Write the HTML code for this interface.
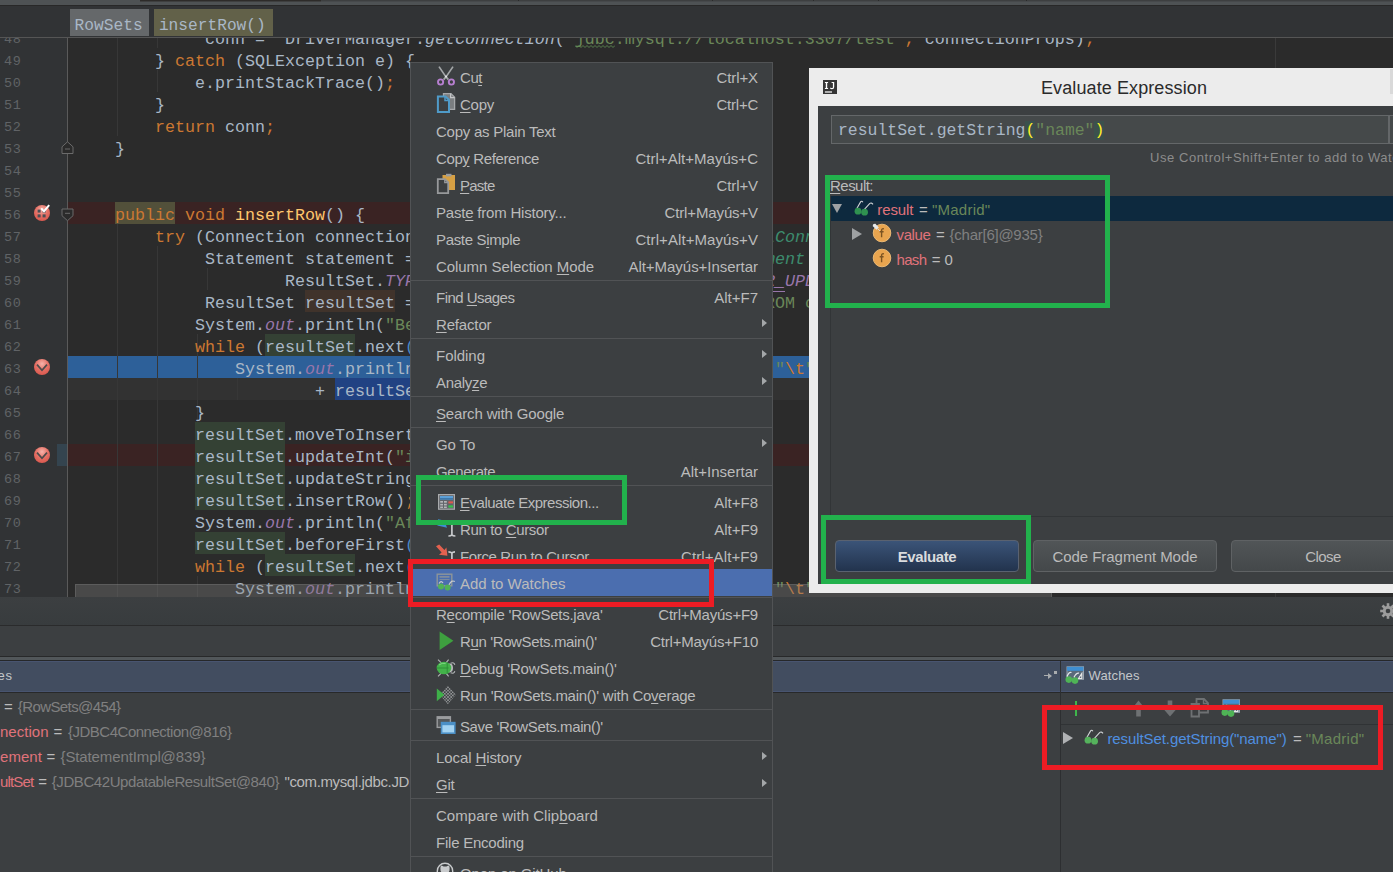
<!DOCTYPE html>
<html>
<head>
<meta charset="utf-8">
<title>Evaluate Expression</title>
<style>
*{box-sizing:border-box;margin:0;padding:0}
html,body{width:1393px;height:872px;overflow:hidden;background:#3c3f41}
body{position:relative;font-family:"Liberation Sans",sans-serif;color:#bbbbbb}
.abs{position:absolute}
/* ---------- top ---------- */
#topstrip{left:0;top:0;width:1393px;height:6px;background:#4e5254;border-bottom:1px solid #282828}
#crumbs{left:0;top:6px;width:1393px;height:32px;background:#313335;border-bottom:1px solid #555555}
.crumb{position:absolute;top:3px;height:27px;font-family:"Liberation Mono",monospace;font-size:16.2px;line-height:35px;color:#a9b7c6;white-space:pre;overflow:hidden}
/* ---------- editor ---------- */
#editor{left:0;top:38px;width:1393px;height:560px;background:#2b2b2b;overflow:hidden}
#gutter{left:0;top:0;width:68px;height:560px;background:#313335;border-right:1px solid #5a5a5a}
.ln{position:absolute;left:4px;height:22px;line-height:28px;overflow:hidden;letter-spacing:.6px;font-family:"Liberation Mono",monospace;font-size:13.5px;color:#606366;white-space:pre}
.cl{position:absolute;left:75px;height:22px;line-height:28px;font-family:"Liberation Mono",monospace;font-size:16.67px;color:#a9b7c6;white-space:pre}
.rowbg{position:absolute;left:68px;height:22px}
.k{color:#cc7832}.s{color:#6a8759}.f{color:#9876aa;font-style:italic}.m{color:#ffc66d}.t{color:#3d8b6e;font-style:italic}.i{font-style:italic}
.hl{background:#344134}.hw{background:#40332b}
.hl,.hw,.hb{display:inline-block;height:22px;vertical-align:top}
.guide{position:absolute;width:1px;background:#373737}
/* ---------- menu ---------- */
#menu{left:410px;top:62px;width:363px;height:820px;background:#3c3f41;border:1px solid #515355;overflow:hidden;font-size:15px;color:#bbbbbb}
.mi{position:absolute;left:0;width:361px;height:27px}
.mi.sel{background:#4b6eaf}
.ml{position:absolute;top:1px;line-height:27px;white-space:pre}
.ms{position:absolute;right:14px;top:1px;line-height:27px;white-space:pre}
.mic{position:absolute;left:25px;top:6px;width:16px;height:16px}
.mar{position:absolute;left:351px;top:9px;width:0;height:0;border-left:5px solid #a4a7a9;border-top:4.5px solid transparent;border-bottom:4.5px solid transparent}
.msep{position:absolute;left:0;width:361px;height:1px;background:#515355}
u{text-decoration:underline;text-underline-offset:2px}
/* ---------- dialog ---------- */
#dlg{left:809px;top:68px;width:600px;height:525px;background:#ececec;overflow:hidden}
#dlgin{left:9px;top:38px;width:600px;height:478px;background:#3c3f41;overflow:hidden}
.trow{height:25px;line-height:25px;font-size:15px;white-space:pre}
.trow span{top:0;white-space:pre}
.btn{position:absolute;height:32px;line-height:31px;text-align:center;font-size:15px;color:#bbbbbb;border:1px solid #5f6264;border-radius:4px;background:linear-gradient(#515557,#44484a);white-space:pre}
.btn.def{font-weight:bold;color:#dadcde;border-color:#5a6270;background:linear-gradient(#3b5478,#22334d)}
/* ---------- bottom ---------- */
#bot{left:0;top:597px;width:1393px;height:275px;background:#3c3f41;overflow:hidden}
.brow{height:25px;line-height:25px;font-size:15px;white-space:pre;width:1393px}
.brow span{top:0;white-space:pre}
</style>
</head>
<body>
<div id="topstrip" class="abs"><div class="abs" style="left:140px;top:0;width:1253px;height:2px;background:linear-gradient(#3d3f40 50%,#46494b 50%)"></div><div class="abs" style="left:140px;top:0;width:181px;height:2px;background:linear-gradient(#2d2b29 50%,#3e3f3f 50%)"></div><div class="abs" style="left:518px;top:0;width:1px;height:1px;background:#2b2b2b"></div><div class="abs" style="left:712px;top:0;width:1px;height:1px;background:#2b2b2b"></div><div class="abs" style="left:813px;top:0;width:1px;height:1px;background:#2b2b2b"></div><div class="abs" style="left:878px;top:0;width:1px;height:1px;background:#2b2b2b"></div><div class="abs" style="left:1026px;top:0;width:1px;height:1px;background:#2b2b2b"></div></div>
<div id="crumbs" class="abs">
  <div class="crumb" style="left:70px;width:79px;background:#65686a;padding-left:4.6px">RowSets</div>
  <div class="crumb" style="left:154px;width:119px;background:#626149;padding-left:4.9px">insertRow()</div>
</div>

<div id="editor" class="abs">
  <!-- EDITOR-START -->
  <div class="rowbg" style="top:164px;width:1325px;background:#3a2323"></div>
  <div class="rowbg" style="top:318px;width:1325px;background:#2d6099"></div>
  <div class="rowbg" style="top:340px;width:1325px;background:#323232"></div>
  <div class="rowbg" style="top:406px;width:1325px;background:#3a2323"></div>
  <div class="guide" style="left:117px;top:-12px;height:110px"></div>
  <div class="guide" style="left:157px;top:-12px;height:22px"></div>
  <div class="guide" style="left:157px;top:32px;height:22px"></div>
  <div class="guide" style="left:117px;top:186px;height:374px"></div>
  <div class="guide" style="left:157px;top:208px;height:352px"></div>
  <div class="guide" style="left:197px;top:296px;height:88px"></div>
  <div class="guide" style="left:197px;top:538px;height:22px"></div>
  <div class="guide" style="left:237px;top:340px;height:22px"></div>
  <div class="guide" style="left:207px;top:230px;height:22px"></div>
  <div class="abs" style="left:1275px;top:0;width:1px;height:560px;background:#3a3a3a"></div>
  <div id="gutter" class="abs"></div>
  <div class="ln" style="top:-12px">48</div>
  <div class="ln" style="top:10px">49</div>
  <div class="ln" style="top:32px">50</div>
  <div class="ln" style="top:54px">51</div>
  <div class="ln" style="top:76px">52</div>
  <div class="ln" style="top:98px">53</div>
  <div class="ln" style="top:120px">54</div>
  <div class="ln" style="top:142px">55</div>
  <div class="ln" style="top:164px">56</div>
  <div class="ln" style="top:186px">57</div>
  <div class="ln" style="top:208px">58</div>
  <div class="ln" style="top:230px">59</div>
  <div class="ln" style="top:252px">60</div>
  <div class="ln" style="top:274px">61</div>
  <div class="ln" style="top:296px">62</div>
  <div class="ln" style="top:318px">63</div>
  <div class="ln" style="top:340px">64</div>
  <div class="ln" style="top:362px">65</div>
  <div class="ln" style="top:384px">66</div>
  <div class="ln" style="top:406px">67</div>
  <div class="ln" style="top:428px">68</div>
  <div class="ln" style="top:450px">69</div>
  <div class="ln" style="top:472px">70</div>
  <div class="ln" style="top:494px">71</div>
  <div class="ln" style="top:516px">72</div>
  <div class="ln" style="top:538px">73</div>
  <div class="cl" style="top:-12px;left:205px;">conn =  DriverManager.<span class="i">getConnection</span>(<span class="s">"jdbc:mysql://localhost:3307/test"</span><span class="k">,</span> connectionProps)<span class="k">;</span></div>
  <div class="cl" style="top:10px;left:155px;">} <span class="k">catch</span> (SQLException e) {</div>
  <div class="cl" style="top:32px;left:195px;">e.printStackTrace()<span class="k">;</span></div>
  <div class="cl" style="top:54px;left:155px;">}</div>
  <div class="cl" style="top:76px;left:155px;"><span class="k">return</span> conn<span class="k">;</span></div>
  <div class="cl" style="top:98px;left:115px;">}</div>
  <div class="cl" style="top:164px;left:115px;"><span class="k hb" style="background:#52503a">public</span> <span class="k">void</span> <span class="m">insertRow</span>() {</div>
  <div class="cl" style="top:186px;left:155px;"><span class="k">try</span> (Connection connection = </div>
  <div class="cl" style="top:186px;left:765px;"><span class="t">lConnection</span></div>
  <div class="cl" style="top:208px;left:205px;">Statement statement = </div>
  <div class="cl" style="top:208px;left:765px;"><span class="t">ment</span></div>
  <div class="cl" style="top:230px;left:285px;">ResultSet.<span class="f">TYPE_SCR</span></div>
  <div class="cl" style="top:230px;left:765px;"><span class="f"><span style="border-bottom:1px solid #9876aa">R_</span>UPDATABLE</span></div>
  <div class="cl" style="top:252px;left:205px;">ResultSet <span class="hw">resultSet</span> = </div>
  <div class="cl" style="top:252px;left:765px;"><span class="s">ROM customers</span></div>
  <div class="cl" style="top:274px;left:195px;">System.<span class="f">out</span>.println(<span class="s">"Before"</span></div>
  <div class="cl" style="top:296px;left:195px;"><span class="k">while</span> (<span class="hl">resultSet</span>.next<span style="color:#4a88c7">(</span></div>
  <div class="cl" style="top:318px;left:235px;">System.<span class="f">out</span>.println(</div>
  <div class="cl" style="top:318px;left:775px;"><span class="s">"</span><span class="k">\t</span><span class="s">"</span></div>
  <div class="cl" style="top:340px;left:315px;">+ <span class="hb" style="background:#214283">resultSet.getString(</span></div>
  <div class="cl" style="top:362px;left:195px;">}</div>
  <div class="cl" style="top:384px;left:195px;"><span class="hl">resultSet</span>.moveToInsertRow</div>
  <div class="cl" style="top:406px;left:195px;"><span class="hl">resultSet</span>.updateInt(<span class="s">"id"</span></div>
  <div class="cl" style="top:428px;left:195px;"><span class="hl">resultSet</span>.updateString(</div>
  <div class="cl" style="top:450px;left:195px;"><span class="hl">resultSet</span>.insertRow()<span class="k">;</span></div>
  <div class="cl" style="top:472px;left:195px;">System.<span class="f">out</span>.println(<span class="s">"After"</span></div>
  <div class="cl" style="top:494px;left:195px;"><span class="hl">resultSet</span>.beforeFirst<span style="color:#4a88c7">(</span></div>
  <div class="cl" style="top:516px;left:195px;"><span class="k">while</span> (<span class="hl">resultSet</span>.next<span style="color:#4a88c7">(</span></div>
  <div class="cl" style="top:538px;left:235px;">System.<span class="f">out</span>.println(</div>
  <div class="cl" style="top:538px;left:775px;"><span class="s">"</span><span class="k">\t</span><span class="s">"</span></div>
  <svg class="abs" style="left:34px;top:167px;overflow:visible" width="16" height="16" viewBox="0 0 16 16"><defs><radialGradient id="bpg56" cx="50%" cy="30%" r="70%"><stop offset="0" stop-color="#f6b3aa"/><stop offset="0.55" stop-color="#e56f64"/><stop offset="1" stop-color="#d9594f"/></radialGradient></defs><circle cx="8" cy="8" r="8" fill="url(#bpg56)"/><g fill="#4a4f55"><rect x="3.6" y="4.6" width="3" height="3"/><rect x="8.6" y="4.6" width="3" height="3"/><rect x="3.6" y="9.4" width="3" height="3"/><rect x="8.6" y="9.4" width="3" height="3"/></g><path d="M7.2 3.4 L10 6.2 L15.2 0.2" fill="none" stroke="#ffffff" stroke-width="2"/></svg>
  <svg class="abs" style="left:34px;top:321px;overflow:visible" width="16" height="16" viewBox="0 0 16 16"><defs><radialGradient id="bpg63" cx="50%" cy="30%" r="70%"><stop offset="0" stop-color="#f6b3aa"/><stop offset="0.55" stop-color="#e56f64"/><stop offset="1" stop-color="#d9594f"/></radialGradient></defs><circle cx="8" cy="8" r="8" fill="url(#bpg63)"/><path d="M3 5.6 L8 11.2 L13 5.6" fill="none" stroke="#4b4b4b" stroke-width="1.7"/></svg>
  <svg class="abs" style="left:34px;top:409px;overflow:visible" width="16" height="16" viewBox="0 0 16 16"><defs><radialGradient id="bpg67" cx="50%" cy="30%" r="70%"><stop offset="0" stop-color="#f6b3aa"/><stop offset="0.55" stop-color="#e56f64"/><stop offset="1" stop-color="#d9594f"/></radialGradient></defs><circle cx="8" cy="8" r="8" fill="url(#bpg67)"/><path d="M3 5.6 L8 11.2 L13 5.6" fill="none" stroke="#4b4b4b" stroke-width="1.7"/></svg>
  <div class="abs" style="left:57px;top:406px;width:10px;height:22px;background:#34444f"></div>
  <svg class="abs" style="left:61px;top:103px" width="13" height="14" viewBox="0 0 13 14"><path d="M1 12.5 V5.8 L6.5 0.8 L12 5.8 V12.5 Z" fill="#2b2b2b" stroke="#6b6b6b" stroke-width="1"/><path d="M4 8 H9" stroke="#6b6b6b" stroke-width="1"/></svg>
  <svg class="abs" style="left:61px;top:170px" width="13" height="14" viewBox="0 0 13 14"><path d="M1 1 V7.7 L6.5 12.7 L12 7.7 V1 Z" fill="#2b2b2b" stroke="#6b6b6b" stroke-width="1"/><path d="M4 5.3 H9" stroke="#6b6b6b" stroke-width="1"/></svg>
  <svg class="abs" style="left:575px;top:7px" width="40" height="3" viewBox="0 0 40 3"><polyline points="0,0.5 2,2.5 4,0.5 6,2.5 8,0.5 10,2.5 12,0.5 14,2.5 16,0.5 18,2.5 20,0.5 22,2.5 24,0.5 26,2.5 28,0.5 30,2.5 32,0.5 34,2.5 36,0.5 38,2.5 40,0.5" fill="none" stroke="#5f8a52" stroke-width="0.9"/></svg>
  <div class="abs" style="left:75px;top:546px;width:977px;height:13px;background:rgba(128,128,128,0.35);border:1px solid rgba(150,150,150,0.25);border-bottom:none"></div>
  <!-- EDITOR-END -->
</div>

<!-- BOTTOM-START -->
  <div id="bot" class="abs">
 <div class="abs" style="left:0;top:0px;width:1393px;height:28px;background:linear-gradient(#3c3f41,#383c3e)"></div>
 <div class="abs" style="left:0;top:28px;width:1393px;height:1px;background:#2a2b2c"></div>
 <div class="abs" style="left:0;top:59px;width:1393px;height:1px;background:#28292a"></div>
 <div class="abs" style="left:0;top:60px;width:1393px;height:3px;background:#52575a"></div>
 <div class="abs" style="left:0;top:63px;width:1393px;height:1px;background:#26282a"></div>
 <div class="abs" style="left:0;top:64px;width:1393px;height:31px;background:#424d60;border-top:1px solid #485470;border-bottom:1px solid #485470"></div>
 <div class="abs" style="left:0;top:95px;width:1393px;height:1px;background:#28292a"></div>
 <div class="abs" style="left:1060px;top:64px;width:1px;height:220px;background:#2d2f31"></div>
 <svg class="abs" style="left:1380px;top:6px" width="16" height="16" viewBox="0 0 16 16"><g fill="#9c9c9c"><circle cx="8" cy="8" r="5.2"/><g><rect x="6.7" y="0.2" width="2.6" height="15.6"/><rect x="6.7" y="0.2" width="2.6" height="15.6" transform="rotate(45 8 8)"/><rect x="6.7" y="0.2" width="2.6" height="15.6" transform="rotate(90 8 8)"/><rect x="6.7" y="0.2" width="2.6" height="15.6" transform="rotate(135 8 8)"/></g></g><circle cx="8" cy="8" r="2.3" fill="#3c3f41"/></svg>
 <div class="abs" style="left:-48px;top:69px;width:60px;text-align:right;height:20px;line-height:20px;font-size:13px;color:#c4c7ca;white-space:pre;letter-spacing:0.752px;margin-left:0.752px">Variables</div>
 <div class="abs" style="left:1044px;top:78px;width:7px;height:1.3px;background:#a9acae"></div><div class="abs" style="left:1048px;top:75.5px;width:0;height:0;border-left:4px solid #a9acae;border-top:3px solid transparent;border-bottom:3px solid transparent"></div><div class="abs" style="left:1053.5px;top:73.5px;width:3px;height:3px;background:#a9acae"></div>
 <svg class="abs" style="left:1065px;top:69px" width="20" height="20" viewBox="0 0 20 20"><rect x="2" y="0.8" width="16.5" height="12.5" fill="#5a6a7a" stroke="#98a4b0" stroke-width="1"/><rect x="2" y="0.8" width="16.5" height="4" fill="#3f8fd2"/><path d="M13.5 12.5 L16.8 7.5 V12.5 Z" fill="none" stroke="#e8e8e8" stroke-width="1.2"/><circle cx="3.8" cy="13.6" r="3.3" fill="#4fb356"/><circle cx="10" cy="14.6" r="3.3" fill="#4fb356"/><path d="M2 10.5 Q4 5.5 6.5 6.5 M9 11.2 Q11.5 6.5 14 7.2" fill="none" stroke="#e4e6e8" stroke-width="1.2"/></svg>
 <div class="abs" style="left:1088.6px;top:69px;height:20px;line-height:20px;font-size:13px;color:#c4c7ca;white-space:pre;letter-spacing:0.129px">Watches</div>
 <div class="abs brow" style="left:0;top:96.89999999999998px"><span class="abs" style="left:3.9px;color:#bbbbbb;letter-spacing:0px">=</span><span class="abs" style="left:17.8px;color:#808080;letter-spacing:-0.6px">{RowSets@454}</span></div>
 <div class="abs brow" style="left:0;top:122.10000000000002px"><span class="abs" style="left:0;color:#e0737b;letter-spacing:0.018px">nection</span><span class="abs" style="left:53.5px;color:#bbbbbb;letter-spacing:0px">=</span><span class="abs" style="left:67.9px;color:#808080;letter-spacing:-0.48px">{JDBC4Connection@816}</span></div>
 <div class="abs brow" style="left:0;top:147.29999999999995px"><span class="abs" style="left:0;color:#e0737b;letter-spacing:0.059px">ement</span><span class="abs" style="left:46.5px;color:#bbbbbb;letter-spacing:0px">=</span><span class="abs" style="left:60.5px;color:#808080;letter-spacing:-0.115px">{StatementImpl@839}</span></div>
 <div class="abs brow" style="left:0;top:171.70000000000005px"><span class="abs" style="left:0;color:#e0737b;letter-spacing:-0.843px">ultSet</span><span class="abs" style="left:38.2px;color:#bbbbbb;letter-spacing:0px">=</span><span class="abs" style="left:51.7px;color:#808080;letter-spacing:-0.408px">{JDBC42UpdatableResultSet@840}</span><span class="abs" style="left:284.5px;color:#bbbbbb;letter-spacing:-0.372px">"com.mysql.jdbc.JDBC42UpdatableResultSet</span></div>
 <div class="abs" style="left:1075px;top:104px;width:2px;height:15px;background:#3fb64b"></div><div class="abs" style="left:1069px;top:110.5px;width:14px;height:2px;background:#3fb64b"></div>
 <svg class="abs" style="left:1132px;top:103px" width="13" height="17" viewBox="0 0 13 17"><path d="M6.5 0.5 L12.5 8 H8.8 V16.5 H4.2 V8 H0.5 Z" fill="#6e7173"/></svg>
 <svg class="abs" style="left:1163px;top:103px" width="14" height="17" viewBox="0 0 14 17"><path d="M7 16.5 L13.5 9 H9.3 V0.5 H4.7 V9 H0.5 Z" fill="#6e7173"/></svg>
 <svg class="abs" style="left:1190px;top:101px" width="20" height="20" viewBox="0 0 20 20"><path d="M6.5 1 H14 L18 5 V14.5 H6.5 Z" fill="none" stroke="#6e7173" stroke-width="1.8"/><path d="M13.5 1 V5.5 H18" fill="none" stroke="#6e7173" stroke-width="1.4"/><path d="M1.5 6 H9 V18.5 H1.5 Z" fill="#3c3f41" stroke="#6e7173" stroke-width="1.8"/></svg>
 <svg class="abs" style="left:1221px;top:102px" width="20" height="20" viewBox="0 0 20 20"><rect x="2" y="0.8" width="16.5" height="12.5" fill="#5a6a7a" stroke="#98a4b0" stroke-width="1"/><rect x="2" y="0.8" width="16.5" height="4" fill="#3f8fd2"/><path d="M13.5 12.5 L16.8 7.5 V12.5 Z" fill="none" stroke="#e8e8e8" stroke-width="1.2"/><circle cx="3.8" cy="13.6" r="3.3" fill="#4fb356"/><circle cx="10" cy="14.6" r="3.3" fill="#4fb356"/><path d="M2 10.5 Q4 5.5 6.5 6.5 M9 11.2 Q11.5 6.5 14 7.2" fill="none" stroke="#e4e6e8" stroke-width="1.2"/></svg>
 <div class="abs" style="left:1061px;top:127px;width:340px;height:1px;background:#303335"></div>
 <div class="abs" style="left:1063px;top:135px;width:0;height:0;border-left:10.5px solid #b0b2b4;border-top:6px solid transparent;border-bottom:6px solid transparent"></div>
 <svg class="abs" style="left:1083.5px;top:132px" width="20" height="16" viewBox="0 0 20 16"><path d="M2.8 8.6 L6.6 1.9 Q7.6 0.4 8.9 2.2 M10.2 9.6 L15.6 3.6 Q17.4 2.2 19 4.4" fill="none" stroke="#d0d3d5" stroke-width="1.1"/><circle cx="4" cy="11.2" r="3.4" fill="#55b25c"/><circle cx="10.6" cy="12.2" r="3.4" fill="#55b25c"/></svg>
 <div class="abs brow" style="left:0;top:129.0px"><span class="abs" style="left:1107.4px;color:#4f8fe0;letter-spacing:-0.084px">resultSet.getString("name")</span><span class="abs" style="left:1293px;color:#bbbbbb;letter-spacing:0px">=</span><span class="abs" style="left:1305.7px;color:#6a8759;letter-spacing:0.275px">"Madrid"</span></div>
</div>
  <!-- BOTTOM-END -->
<!-- MENU-START -->
  <div id="menu" class="abs">
  <div class="mi" style="top:0px"><span class="mic ic-cut"><svg width="20" height="22" viewBox="0 0 20 22" style="position:absolute;left:0;top:-4px"><path d="M3 1.6 L9.6 11.4 L12.4 14.6 M17 1.6 L10.4 11.4 L7.6 14.6" stroke="#a4a7a9" stroke-width="1.7" fill="none" stroke-linejoin="round"/><circle cx="10" cy="11.6" r="1.1" fill="#e4e4e4"/><circle cx="4.6" cy="17" r="2.6" fill="none" stroke="#b77fd0" stroke-width="1.9"/><circle cx="15.4" cy="17" r="2.6" fill="none" stroke="#b77fd0" stroke-width="1.9"/></svg></span><span class="ml" style="left:49px;letter-spacing:-0.448px">Cu<u>t</u></span><span class="ms" style="letter-spacing:-0.099px">Ctrl+X</span></div>
  <div class="mi" style="top:27px"><span class="mic ic-copy"><svg width="20" height="22" viewBox="0 0 20 22" style="position:absolute;left:0;top:-4px"><path d="M7.5 1.6 H15 L18.6 5.2 V17.4 H7.5 Z" fill="#7b7e80" stroke="#a6a8aa" stroke-width="1.3"/><path d="M14.6 1.6 V5.6 H18.6" fill="none" stroke="#c4c6c8" stroke-width="1.2"/><path d="M1.9 4.4 H9.4 L13 8 V20.1 H1.9 Z" fill="#3c3f41" stroke="#4f9bc9" stroke-width="2"/><path d="M9 4.4 V8.4 H13" fill="none" stroke="#4f9bc9" stroke-width="1.5"/></svg></span><span class="ml" style="left:49px;letter-spacing:-0.258px"><u>C</u>opy</span><span class="ms" style="letter-spacing:-0.237px">Ctrl+C</span></div>
  <div class="mi" style="top:54px"><span class="ml" style="left:25px;letter-spacing:-0.248px">Copy as Plain Text</span></div>
  <div class="mi" style="top:81px"><span class="ml" style="left:25px;letter-spacing:-0.386px">Cop<u>y</u> Reference</span><span class="ms" style="letter-spacing:0.03px">Ctrl+Alt+Mayús+C</span></div>
  <div class="mi" style="top:108px"><span class="mic ic-paste"><svg width="20" height="22" viewBox="0 0 20 22" style="position:absolute;left:0;top:-4px"><rect x="6.5" y="2" width="12.5" height="15" fill="#d6a044"/><rect x="10" y="0.8" width="5.5" height="2.6" fill="#9a9c9e"/><path d="M1.8 6.2 H9 L12.2 9.4 V20.2 H1.8 Z" fill="#3c3f41" stroke="#97999b" stroke-width="1.8"/><path d="M8.8 6.2 V9.6 H12.2" fill="none" stroke="#97999b" stroke-width="1.4"/></svg></span><span class="ml" style="left:49px;letter-spacing:-0.772px"><u>P</u>aste</span><span class="ms" style="letter-spacing:-0.099px">Ctrl+V</span></div>
  <div class="mi" style="top:135px"><span class="ml" style="left:25px;letter-spacing:-0.203px">Past<u>e</u> from History...</span><span class="ms" style="letter-spacing:-0.129px">Ctrl+Mayús+V</span></div>
  <div class="mi" style="top:162px"><span class="ml" style="left:25px;letter-spacing:-0.34px">Paste S<u>i</u>mple</span><span class="ms" style="letter-spacing:0.081px">Ctrl+Alt+Mayús+V</span></div>
  <div class="mi" style="top:189px"><span class="ml" style="left:25px;letter-spacing:-0.06px">Column Selection <u>M</u>ode</span><span class="ms" style="letter-spacing:-0.026px">Alt+Mayús+Insertar</span></div>
  <div class="msep" style="top:217px"></div>
  <div class="mi" style="top:220px"><span class="ml" style="left:25px;letter-spacing:-0.529px">Find <u>U</u>sages</span><span class="ms" style="letter-spacing:-0.014px">Alt+F7</span></div>
  <div class="mi" style="top:247px"><span class="ml" style="left:25px;letter-spacing:-0.163px"><u>R</u>efactor</span><span class="mar"></span></div>
  <div class="msep" style="top:275px"></div>
  <div class="mi" style="top:278px"><span class="ml" style="left:25px;letter-spacing:-0.029px">Folding</span><span class="mar"></span></div>
  <div class="mi" style="top:305px"><span class="ml" style="left:25px;letter-spacing:-0.311px">Analy<u>z</u>e</span><span class="mar"></span></div>
  <div class="msep" style="top:333px"></div>
  <div class="mi" style="top:336px"><span class="ml" style="left:25px;letter-spacing:-0.15px"><u>S</u>earch with Google</span></div>
  <div class="msep" style="top:364px"></div>
  <div class="mi" style="top:367px"><span class="ml" style="left:25px;letter-spacing:-0.11px">Go To</span><span class="mar"></span></div>
  <div class="mi" style="top:394px"><span class="ml" style="left:25px;letter-spacing:-0.406px">Generate</span><span class="ms" style="letter-spacing:0.015px">Alt+Insertar</span></div>
  <div class="msep" style="top:422px"></div>
  <div class="mi" style="top:425px"><span class="mic ic-eval"><svg width="17" height="16" viewBox="0 0 17 16" style="position:absolute;left:2px;top:0"><rect x="0.6" y="0.6" width="15.8" height="14.6" fill="#62656a" stroke="#a9abad" stroke-width="1.2"/><rect x="2" y="2" width="13" height="3.6" fill="#5b9fd6"/><rect x="2" y="4" width="13" height="1.6" fill="#3d78ab"/><g fill="#b4b6b8"><rect x="2.2" y="7" width="2.8" height="1.7"/><rect x="6" y="7" width="2.8" height="1.7"/><rect x="2.2" y="9.8" width="2.8" height="1.7"/><rect x="6" y="9.8" width="2.8" height="1.7"/><rect x="2.2" y="12.5" width="2.8" height="1.5"/><rect x="6" y="12.5" width="2.8" height="1.5"/></g><rect x="10.4" y="7.4" width="4.6" height="2" fill="#e0574d"/><rect x="10.4" y="11.4" width="4.6" height="2.2" fill="#35c24a"/></svg></span><span class="ml" style="left:49px;letter-spacing:-0.484px"><u>E</u>valuate Expression...</span><span class="ms" style="letter-spacing:-0.014px">Alt+F8</span></div>
  <div class="mi" style="top:452px"><span class="mic ic-runcur"><svg width="20" height="20" viewBox="0 0 20 20" style="position:absolute;left:0;top:-2px"><path d="M2 0.2 L8.4 1.4 L11 8.8 L1.4 6.6 Z" fill="#3d8fd1"/><path d="M12.4 4.6 Q15 4.6 15.9 5.8 Q16.8 4.6 19.4 4.6 M15.9 5.4 V16.2 M12.4 17 Q15 17 15.9 15.8 Q16.8 17 19.4 17" stroke="#c8cacc" stroke-width="1.7" fill="none"/></svg></span><span class="ml" style="left:49px;letter-spacing:-0.375px">Run to <u>C</u>ursor</span><span class="ms" style="letter-spacing:-0.014px">Alt+F9</span></div>
  <div class="mi" style="top:479px"><span class="mic ic-forcecur"><svg width="20" height="20" viewBox="0 0 20 20" style="position:absolute;left:-1px;top:-4px"><path d="M1 2.2 L4.2 0.6 L9.4 6 L11.4 3.6 L12.4 11.8 L4 10.8 L6.6 8.6 Z" fill="#e3614f"/><path d="M13.4 7.8 Q16 7.8 16.9 9 Q17.8 7.8 20.4 7.8 M16.9 8.6 V19.6" stroke="#c8cacc" stroke-width="1.7" fill="none"/></svg></span><span class="ml" style="left:49px;letter-spacing:-0.363px">Force Run to Cursor</span><span class="ms" style="letter-spacing:0.104px">Ctrl+Alt+F9</span></div>
  <div class="mi sel" style="top:506px"><span class="mic ic-watch"><svg width="20" height="20" viewBox="0 0 20 20" style="position:absolute;left:0;top:-2px"><rect x="1.2" y="1.2" width="14.6" height="11.6" fill="none" stroke="#8e9599" stroke-width="1.4"/><rect x="3.5" y="3.2" width="10" height="1.4" fill="#8e9599"/><rect x="3.5" y="6" width="10" height="1" fill="#8e9599" opacity=".7"/><circle cx="5" cy="13.6" r="3" fill="#52b257"/><circle cx="11.6" cy="14.4" r="3" fill="#52b257"/><path d="M3 10.5 Q5 7 7 10 M13 11.8 Q15.5 6.5 18.8 8.6" fill="none" stroke="#c9ccce" stroke-width="1.2"/></svg></span><span class="ml" style="left:49px;letter-spacing:0.011px">Add to Watches</span></div>
  <div class="msep" style="top:534px"></div>
  <div class="mi" style="top:537px"><span class="ml" style="left:25px;letter-spacing:-0.249px">R<u>e</u>compile 'RowSets.java'</span><span class="ms" style="letter-spacing:-0.219px">Ctrl+Mayús+F9</span></div>
  <div class="mi" style="top:564px"><span class="mic ic-run"><svg width="18" height="20" viewBox="0 0 18 20" style="position:absolute;left:3px;top:-2px"><path d="M0.6 0.6 L14.4 9.8 L0.6 19 Z" fill="#3ea03f"/></svg></span><span class="ml" style="left:49px;letter-spacing:-0.375px">R<u>u</u>n 'RowSets.main()'</span><span class="ms" style="letter-spacing:-0.22px">Ctrl+Mayús+F10</span></div>
  <div class="mi" style="top:591px"><span class="mic ic-debug"><svg width="20" height="20" viewBox="0 0 20 20" style="position:absolute;left:0;top:-2px"><path d="M2 1.6 L6 5.6 M12.6 1.6 L9.6 5.4 M2 18.4 L6 14.4 M12.6 18.4 L9.6 14.6 M14.6 5.2 Q18.2 3.8 18.8 6.8 M14.6 14.8 Q18.2 16.2 18.8 13.2" stroke="#b0b3b5" stroke-width="1.1" fill="none"/><ellipse cx="13.4" cy="10" rx="3.6" ry="4.4" fill="#b8babc"/><ellipse cx="8" cy="10" rx="7.3" ry="6.3" fill="#43b34a"/><path d="M0.8 10 H12.6 M11.2 4.4 V15.6" stroke="#2f9038" stroke-width="1"/><path d="M3 7 Q6 4.6 9.6 5.4" stroke="#7fd584" stroke-width="1" fill="none"/></svg></span><span class="ml" style="left:49px;letter-spacing:-0.182px"><u>D</u>ebug 'RowSets.main()'</span></div>
  <div class="mi" style="top:618px"><span class="mic ic-cover"><svg width="20" height="20" viewBox="0 0 20 20" style="position:absolute;left:0;top:-2px"><defs><pattern id="chk" width="3.2" height="3.2" patternUnits="userSpaceOnUse"><rect width="1.6" height="1.6" fill="#909395"/><rect x="1.6" y="1.6" width="1.6" height="1.6" fill="#909395"/></pattern></defs><path d="M11.8 0.4 L19.8 9.8 L11.8 19.2 L3.8 9.8 Z" fill="url(#chk)"/><path d="M0.8 3.4 L8.4 9.8 L0.8 16.2 Z" fill="#3eb049"/></svg></span><span class="ml" style="left:49px;letter-spacing:-0.258px">Run 'RowSets.main()' with Co<u>v</u>erage</span></div>
  <div class="msep" style="top:646px"></div>
  <div class="mi" style="top:649px"><span class="mic ic-save"><svg width="20" height="20" viewBox="0 0 20 20" style="position:absolute;left:0;top:-3px"><rect x="1.2" y="1.8" width="13.2" height="10.6" fill="#55585a" stroke="#9a9c9e" stroke-width="1.4"/><rect x="1.2" y="1.8" width="13.2" height="2.2" fill="#9a9c9e"/><rect x="5.6" y="7.6" width="13.2" height="10.6" fill="#a3d3f2" stroke="#4b90c6" stroke-width="1.6"/><rect x="5.6" y="7.6" width="13.2" height="2.6" fill="#4b90c6"/></svg></span><span class="ml" style="left:49px;letter-spacing:-0.38px">Save 'RowSets.main()'</span></div>
  <div class="msep" style="top:677px"></div>
  <div class="mi" style="top:680px"><span class="ml" style="left:25px;letter-spacing:-0.1px">Local <u>H</u>istory</span><span class="mar"></span></div>
  <div class="mi" style="top:707px"><span class="ml" style="left:25px;letter-spacing:-0.224px"><u>G</u>it</span><span class="mar"></span></div>
  <div class="msep" style="top:735px"></div>
  <div class="mi" style="top:738px"><span class="ml" style="left:25px;letter-spacing:0.041px">Compare with Clip<u>b</u>oard</span></div>
  <div class="mi" style="top:765px"><span class="ml" style="left:25px;letter-spacing:-0.23px">File Encoding</span></div>
  <div class="msep" style="top:793px"></div>
  <div class="mi" style="top:796px"><span class="mic ic-github"><svg width="18" height="18" viewBox="0 0 18 18" style="position:absolute;left:0;top:-3px"><circle cx="9" cy="9" r="8.4" fill="#c8cacc"/><circle cx="9" cy="9" r="7" fill="#3c3f41"/><path d="M4.5 7.5 Q4 4 5.5 3.5 Q7 4 7.5 4.6 Q9 4.2 10.5 4.6 Q11 4 12.5 3.5 Q14 4 13.5 7.5 Q14 11 9 11 Q4 11 4.5 7.5 Z" fill="#c8cacc"/></svg></span><span class="ml" style="left:49px;letter-spacing:-0.122px">Open on GitHub</span></div>
</div>
  <!-- MENU-END -->
<!-- DIALOG-START -->
  <div id="dlg" class="abs">
 <svg class="abs" style="left:14px;top:12px" width="14" height="14" viewBox="0 0 14 14"><rect width="14" height="14" fill="#353535"/><path d="M1.9 2 H5.1 V3.1 H4.2 V8 H5.1 V9.1 H1.9 V8 H2.8 V3.1 H1.9 Z" fill="#fff"/><path d="M8.6 2 H11.2 V7 Q11.2 9.2 9 9.2 Q7.6 9.2 6.9 8.3 L7.7 7.5 Q8.2 8.1 8.9 8.1 Q9.9 8.1 9.9 6.9 V3.1 H8.6 Z" fill="#fff"/><rect x="1.9" y="11.4" width="7.1" height="1.2" fill="#fff"/></svg>
 <div class="abs" style="left:232px;top:0;height:38px;line-height:40px;font-size:18px;color:#2a2a2a;white-space:pre;letter-spacing:0.1px">Evaluate Expression</div>
 <div class="abs" style="left:581px;top:1px;width:3px;height:25px;background:#d9d9d9"></div>
 <div id="dlgin" class="abs">
  <div class="abs" style="left:13px;top:9px;width:558px;height:29px;background:#45494a;border:1px solid #646769"></div>
  <div class="abs" style="left:571px;top:9px;width:10px;height:29px;background:#45494a;border-left:1px solid #646769;border-top:1px solid #646769;border-bottom:1px solid #646769"></div>
  <div class="abs" style="left:20px;top:9px;height:29px;line-height:32px;font-family:'Liberation Mono',monospace;font-size:16.45px;color:#a9b7c6;white-space:pre">resultSet.getString<span style="color:#ffef28;background:#3b514d">(</span><span style="color:#6a8759">"name"</span><span style="color:#ffef28;background:#3b514d">)</span></div>
  <div class="abs" style="left:332px;top:43px;height:18px;line-height:18px;font-size:13px;color:#8c8c8c;white-space:pre;letter-spacing:0.565px">Use Control+Shift+Enter to add to Watches</div>
  <div class="abs" style="left:12px;top:70px;height:20px;line-height:20px;font-size:15px;color:#bbbbbb;white-space:pre;letter-spacing:-0.527px"><u>R</u>esult:</div>
  <div class="abs" style="left:12px;top:90px;width:600px;height:321px;border-left:1px solid #323537;border-bottom:1px solid #323537"></div>
  <div class="abs" style="left:13px;top:90px;width:600px;height:25px;background:#0d293e"></div>
  <div class="abs" style="left:14.399999999999977px;top:98px;width:0;height:0;border-top:9.5px solid #9ea1a3;border-left:5.5px solid transparent;border-right:5.5px solid transparent"></div>
  <svg class="abs" style="left:35.5px;top:94px" width="20" height="16" viewBox="0 0 20 16"><path d="M2.8 8.6 L6.6 1.9 Q7.6 0.4 8.9 2.2 M10.2 9.6 L15.6 3.6 Q17.4 2.2 19 4.4" fill="none" stroke="#d0d3d5" stroke-width="1.1"/><circle cx="4" cy="11.2" r="3.4" fill="#2f9150"/><circle cx="10.6" cy="12.2" r="3.4" fill="#2f9150"/></svg>
  <div class="abs trow" style="left:0;top:91px"><span class="abs" style="left:59.299999999999955px;color:#e0737b;letter-spacing:-0.115px">result</span><span class="abs" style="left:101px;color:#bbbbbb;letter-spacing:0px">=</span><span class="abs" style="left:114px;color:#6a8759;letter-spacing:0.237px">"Madrid"</span></div>
  <div class="abs" style="left:34px;top:122px;width:0;height:0;border-left:10px solid #9ea1a3;border-top:6px solid transparent;border-bottom:6px solid transparent"></div>
  <svg class="abs" style="left:54px;top:117px" width="20" height="20" viewBox="0 0 20 20"><circle cx="10" cy="10" r="8.8" fill="#e9a54f" stroke="#f3c078" stroke-width="0.9"/><path d="M11.9 5.9 Q9.6 5.2 9.6 7.6 V14.2 M7.7 8.8 H11.6" fill="none" stroke="#7c5422" stroke-width="1.4"/><path d="M0.8 3.2 Q0.6 0.6 3.4 0.8 L6.8 4.6 L4.6 6.8 Z" fill="#e8e8e8"/><path d="M5.5 5.5 L8 8" stroke="#d8d8d8" stroke-width="1"/></svg>
  <div class="abs trow" style="left:0;top:115.5px"><span class="abs" style="left:78.5px;color:#e0737b;letter-spacing:-0.372px">value</span><span class="abs" style="left:118px;color:#bbbbbb;letter-spacing:0px">=</span><span class="abs" style="left:131.60000000000002px;color:#808080;letter-spacing:-0.257px">{char[6]@935}</span></div>
  <svg class="abs" style="left:54px;top:142px" width="20" height="20" viewBox="0 0 20 20"><circle cx="10" cy="10" r="8.8" fill="#e9a54f" stroke="#f3c078" stroke-width="0.9"/><path d="M11.9 5.9 Q9.6 5.2 9.6 7.6 V14.2 M7.7 8.8 H11.6" fill="none" stroke="#7c5422" stroke-width="1.4"/></svg>
  <div class="abs trow" style="left:0;top:140.5px"><span class="abs" style="left:78.5px;color:#e0737b;letter-spacing:-0.683px">hash</span><span class="abs" style="left:113.70000000000005px;color:#bbbbbb;letter-spacing:0px">=</span><span class="abs" style="left:126.60000000000002px;color:#bbbbbb;letter-spacing:0px">0</span></div>
  <div class="btn def" style="left:17px;top:434px;width:184px;letter-spacing:-0.388px">Evaluate</div>
  <div class="btn" style="left:215px;top:434px;width:184px;letter-spacing:-0.05px">Code Fragment Mode</div>
  <div class="btn" style="left:413px;top:434px;width:184px;letter-spacing:-0.592px">Close</div>
 </div>
</div>
  <!-- DIALOG-END -->
<!-- ANNOT-START -->
  <svg id="annot" class="abs" style="left:0;top:0;pointer-events:none" width="1393" height="872" viewBox="0 0 1393 872" shape-rendering="crispEdges">
 <rect x="827.5" y="177.5" width="280" height="128" fill="none" stroke="#22b14c" stroke-width="5"/>
 <rect x="418.5" y="477.5" width="206" height="45" fill="none" stroke="#22b14c" stroke-width="5"/>
 <rect x="823.5" y="517.5" width="205" height="64" fill="none" stroke="#22b14c" stroke-width="5"/>
 <rect x="410.5" y="561.5" width="301" height="43" fill="none" stroke="#ed1c24" stroke-width="5"/>
 <rect x="1044.5" y="707.5" width="336" height="60" fill="none" stroke="#ed1c24" stroke-width="5"/>
</svg>
  <!-- ANNOT-END -->
</body>
</html>
